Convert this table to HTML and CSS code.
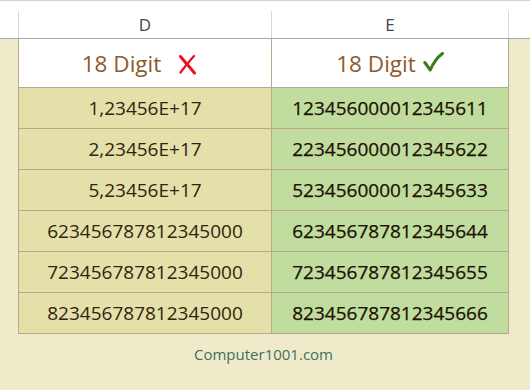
FILE: index.html
```html
<!DOCTYPE html>
<html>
<head>
<meta charset="utf-8">
<link rel="stylesheet" href="styles.css">
</head>
<body>
<div class="colhdr">
  <div class="gutter"></div>
  <div class="letter">D</div>
  <div class="letter">E</div>
  <div class="letter rest"></div>
</div>
<div class="sheet">
  <div class="grid">
    <div class="cell head d-head"><span>18 Digit</span>
      <svg class="xmark" width="19" height="21" viewBox="0 0 19 21"><path d="M2.5 2.5 C7 8 12 13.5 16.5 19" fill="none" stroke="#e8131f" stroke-width="3" stroke-linecap="round"/><path d="M16 2 C11 7.5 6.5 13 2.5 18.5" fill="none" stroke="#e8131f" stroke-width="2.3" stroke-linecap="round"/></svg>
    </div>
    <div class="cell head e-head"><span>18 Digit</span>
      <svg class="check" width="21" height="20" viewBox="0 0 21 20"><path d="M1.8 10.5 L7.3 18 C10 11.5 14 5.5 19.5 1.5" fill="none" stroke="#3a7d1c" stroke-width="3" stroke-linecap="round" stroke-linejoin="round"/></svg>
    </div>
    <div class="cell d">1,23456E+17</div>
    <div class="cell e">123456000012345611</div>
    <div class="cell d">2,23456E+17</div>
    <div class="cell e">223456000012345622</div>
    <div class="cell d">5,23456E+17</div>
    <div class="cell e">523456000012345633</div>
    <div class="cell d">623456787812345000</div>
    <div class="cell e">623456787812345644</div>
    <div class="cell d">723456787812345000</div>
    <div class="cell e">723456787812345655</div>
    <div class="cell d">823456787812345000</div>
    <div class="cell e">823456787812345666</div>
  </div>
  <div class="footer">Computer1001.com</div>
</div>
</body>
</html>
```
FILE: styles.css
```css
html, body {
  margin: 0;
  padding: 0;
}
body {
  background: #efebca;
  font-family: "Open Sans", "Noto Sans", sans-serif;
  width: 530px;
  height: 390px;
  overflow: hidden;
}
.colhdr {
  display: grid;
  grid-template-columns: 18px 253px 237px 1fr;
  height: 37px;
  background: #ffffff;
  border-top: 1px solid #d2d2d2;
  border-bottom: 1px solid #a9a9a9;
}
.letter {
  margin-top: 10px;
  border-left: 1px solid #d9d9d9;
  display: flex;
  align-items: center;
  justify-content: center;
  font-size: 17px;
  color: #444444;
  line-height: 1;
  padding-bottom: 1px;
}
.sheet {
  width: 491px;
  margin-left: 18px;
}
.grid {
  display: grid;
  grid-template-columns: 252px 236px;
  grid-template-rows: 48px repeat(6, 40px);
  gap: 1px;
  padding: 0 1px 1px 1px;
  background: #b9a98a;
}
.cell {
  display: flex;
  align-items: center;
  justify-content: center;
  font-size: 19px;
  color: #33220f;
  line-height: 1;
  padding-top: 1px;
}
.cell.d {
  background: #e4e0aa;
}
.cell.e {
  background: #c0dd9f;
  color: #1c1104;
  -webkit-text-stroke: 0.25px #1c1104;
}
.cell.head {
  background: #ffffff;
  font-size: 22.5px;
  color: #8d5a2c;
  padding-top: 2px;
  -webkit-text-stroke: 0;
}
.d-head {
  padding-right: 11px;
}
.xmark {
  margin-left: 17px;
  margin-top: 1px;
}
.check {
  margin-left: 7px;
  margin-top: -4px;
}
.footer {
  text-align: center;
  font-size: 15px;
  color: #3f6e63;
  margin-top: 10px;
  line-height: 20px;
}
```
